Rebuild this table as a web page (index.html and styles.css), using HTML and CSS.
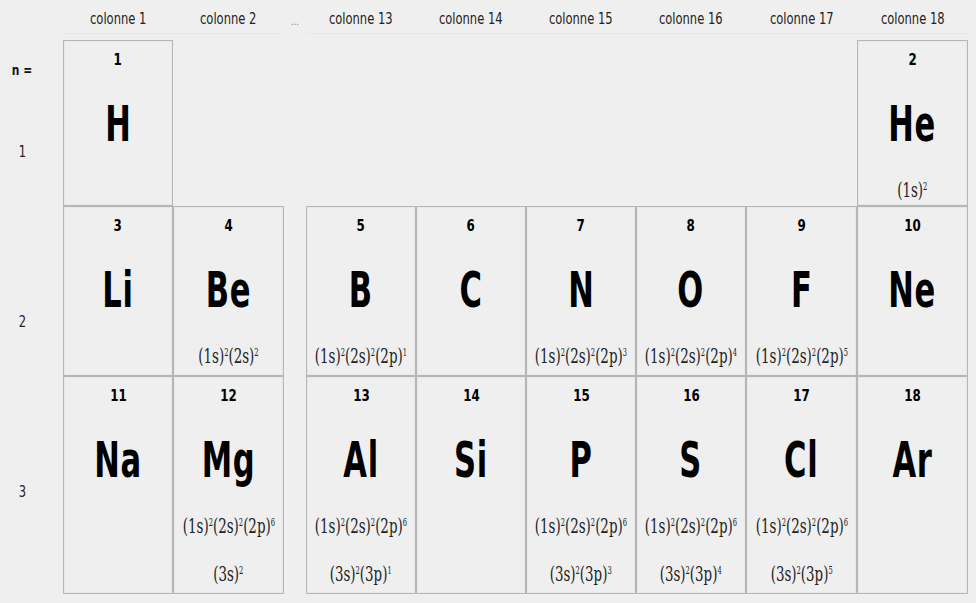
FILE: index.html
```html
<!DOCTYPE html>
<html lang="fr">
<head>
<meta charset="utf-8">
<title>Tableau périodique</title>
<link rel="stylesheet" href="styles.css">
</head>
<body>
<div class="table">
  <div class="corner"></div>
  <div class="head"><span class="ht">colonne 1</span></div>
  <div class="head"><span class="ht">colonne 2</span></div>
  <div class="head dots"><span class="ht">…</span></div>
  <div class="head"><span class="ht">colonne 13</span></div>
  <div class="head"><span class="ht">colonne 14</span></div>
  <div class="head"><span class="ht">colonne 15</span></div>
  <div class="head"><span class="ht">colonne 16</span></div>
  <div class="head"><span class="ht">colonne 17</span></div>
  <div class="head"><span class="ht">colonne 18</span></div>

  <div class="label first"><span class="n">n =</span><span class="lv">1</span></div>
  <div class="cell"><div class="num">1</div><div class="sym"><span>H</span></div></div>
  <div class="blank"></div>
  <div class="cell"><div class="num">2</div><div class="sym"><span>He</span></div><div class="cfg"><span>(1s)<sup>2</sup></span></div></div>

  <div class="label"><span class="lv">2</span></div>
  <div class="cell"><div class="num">3</div><div class="sym"><span>Li</span></div></div>
  <div class="cell"><div class="num">4</div><div class="sym"><span>Be</span></div><div class="cfg"><span>(1s)<sup>2</sup>(2s)<sup>2</sup></span></div></div>
  <div class="gap"></div>
  <div class="cell"><div class="num">5</div><div class="sym"><span>B</span></div><div class="cfg"><span>(1s)<sup>2</sup>(2s)<sup>2</sup>(2p)<sup>1</sup></span></div></div>
  <div class="cell"><div class="num">6</div><div class="sym"><span>C</span></div></div>
  <div class="cell"><div class="num">7</div><div class="sym"><span>N</span></div><div class="cfg"><span>(1s)<sup>2</sup>(2s)<sup>2</sup>(2p)<sup>3</sup></span></div></div>
  <div class="cell"><div class="num">8</div><div class="sym"><span>O</span></div><div class="cfg"><span>(1s)<sup>2</sup>(2s)<sup>2</sup>(2p)<sup>4</sup></span></div></div>
  <div class="cell"><div class="num">9</div><div class="sym"><span>F</span></div><div class="cfg"><span>(1s)<sup>2</sup>(2s)<sup>2</sup>(2p)<sup>5</sup></span></div></div>
  <div class="cell"><div class="num">10</div><div class="sym"><span>Ne</span></div></div>

  <div class="label"><span class="lv">3</span></div>
  <div class="cell"><div class="num">11</div><div class="sym"><span>Na</span></div></div>
  <div class="cell"><div class="num">12</div><div class="sym"><span>Mg</span></div><div class="cfg"><span>(1s)<sup>2</sup>(2s)<sup>2</sup>(2p)<sup>6</sup></span></div><div class="cfg"><span>(3s)<sup>2</sup></span></div></div>
  <div class="gap"></div>
  <div class="cell"><div class="num">13</div><div class="sym"><span>Al</span></div><div class="cfg"><span>(1s)<sup>2</sup>(2s)<sup>2</sup>(2p)<sup>6</sup></span></div><div class="cfg"><span>(3s)<sup>2</sup>(3p)<sup>1</sup></span></div></div>
  <div class="cell"><div class="num">14</div><div class="sym"><span>Si</span></div></div>
  <div class="cell"><div class="num">15</div><div class="sym"><span>P</span></div><div class="cfg"><span>(1s)<sup>2</sup>(2s)<sup>2</sup>(2p)<sup>6</sup></span></div><div class="cfg"><span>(3s)<sup>2</sup>(3p)<sup>3</sup></span></div></div>
  <div class="cell"><div class="num">16</div><div class="sym"><span>S</span></div><div class="cfg"><span>(1s)<sup>2</sup>(2s)<sup>2</sup>(2p)<sup>6</sup></span></div><div class="cfg"><span>(3s)<sup>2</sup>(3p)<sup>4</sup></span></div></div>
  <div class="cell"><div class="num">17</div><div class="sym"><span>Cl</span></div><div class="cfg"><span>(1s)<sup>2</sup>(2s)<sup>2</sup>(2p)<sup>6</sup></span></div><div class="cfg"><span>(3s)<sup>2</sup>(3p)<sup>5</sup></span></div></div>
  <div class="cell"><div class="num">18</div><div class="sym"><span>Ar</span></div></div>
</div>
</body>
</html>
```
FILE: styles.css
```css
html, body {
  margin: 0;
  padding: 0;
  background: #efefef;
}
body {
  font-family: "DejaVu Sans Condensed", "DejaVu Sans", sans-serif;
  color: #111;
}
.table {
  display: grid;
  grid-template-columns: 63px 110px 111px 22px 110px 110px 110px 110px 111px 111px;
  grid-template-rows: 40px 166px 170px 218px;
}
.head {
  text-align: center;
  line-height: 38px;
  height: 34px;
  box-sizing: border-box;
  border-bottom: 1px solid #e8e8e8;
}
.head .ht {
  display: inline-block;
  font-size: 16px;
  color: #222;
  transform: scaleX(0.8);
  margin-top: -1px;
}
.head.dots { border-bottom: none; }
.head.dots .ht { font-size: 11px; color: #777; margin-top: 3px; }
.label {
  display: flex;
  flex-direction: column;
  align-items: center;
  width: 44px;
}
.label .lv {
  display: inline-block;
  font-size: 15px;
  line-height: 20px;
  margin-top: 106px;
  transform: scaleX(0.85);
  color: #222;
}
.label.first .n {
  display: inline-block;
  font-size: 14px;
  font-weight: bold;
  line-height: 20px;
  margin-top: 20px;
  transform: scaleX(0.85);
}
.label.first .lv { margin-top: 62px; }
.blank { grid-column: span 7; }
.cell {
  border: 1px solid #b6b6b6;
  box-shadow: inset 0 0 0 1px #e8e8e8;
  display: flex;
  flex-direction: column;
  align-items: center;
  padding-top: 9px;
  min-width: 0;
  overflow: hidden;
}
.num {
  font-size: 15px;
  font-weight: bold;
  line-height: 20px;
  transform: scaleX(0.88);
  color: #000;
}
.sym {
  margin-top: 24px;
  line-height: 60px;
  height: 60px;
}
.sym span {
  display: inline-block;
  font-size: 50px;
  font-weight: bold;
  color: #000;
  transform: scaleX(0.68);
  letter-spacing: 1px;
}
.cfg {
  line-height: 48px;
  height: 48px;
  white-space: nowrap;
}
.sym + .cfg { margin-top: 12px; }
.cfg span {
  display: inline-block;
  font-family: "DejaVu Serif Condensed", "DejaVu Serif", serif;
  font-size: 21px;
  color: #222;
  transform: scaleX(0.71);
}
.cfg sup {
  font-size: 0.5em;
  line-height: 0;
  vertical-align: 0.66em;
}
```
